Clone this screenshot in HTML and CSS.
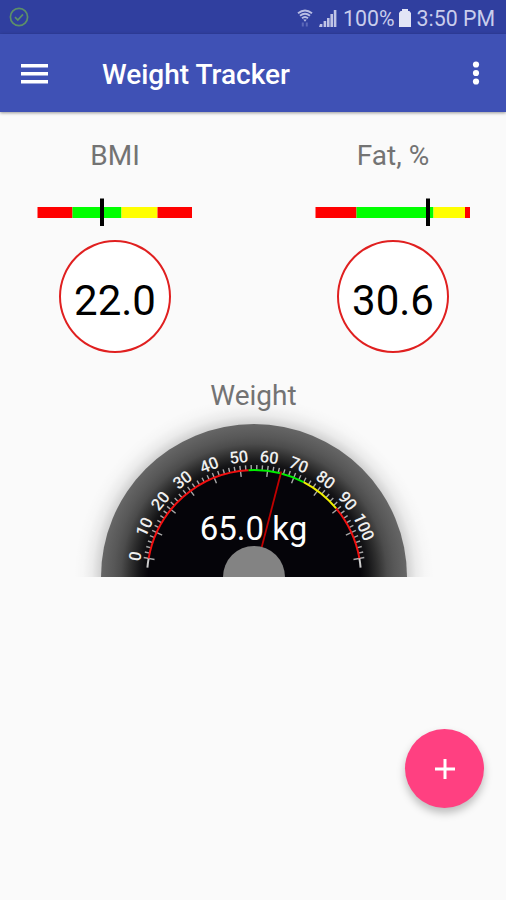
FILE: index.html
```
<!DOCTYPE html>
<html lang="en">
<head>
    <meta charset="UTF-8">
    <meta name="viewport" content="width=device-width, initial-scale=1.0">
    <title>Weight Tracker</title>
    <link rel="stylesheet" href="styles.css">
</head>
<body>

    <div class="status-bar">
        <svg class="check" width="20" height="20" viewBox="0 0 20 20">
            <circle cx="10" cy="10" r="8.6"/>
            <path d="M6 10.2l2.8 2.8 5.2-5.6"/>
        </svg>
        <div class="status-right">
            <svg class="wifi" width="16" height="19" viewBox="0 0 16 19">
                <path d="M1 4.2Q8-1.4 15 4.2M3 6.8Q8 2.6 13 6.8M5 9.3Q8 6.8 11 9.3"/>
                <path class="fill" d="M6.3 10.6h3.4L8 12.8z"/>
                <path class="dim" d="M5.8 13.5v4M9.8 13.5v4"/>
            </svg>
            <svg class="signal" width="18" height="18" viewBox="0 0 18 18">
                <path d="M1 15h2.4v3H0zM4.6 12h2.6v6H4.6zM8 9h2.6v9H8zM11.4 5h2.6v13h-2.6zM14.8 1h2.6v17h-2.6z"/>
            </svg>
            <span class="percent">100%</span>
            <svg class="battery" width="12" height="18" viewBox="0 0 12 18">
                <path d="M3 0h6v2h1.4L12 4v14H0V4l1.6-2H3z"/>
            </svg>
            <span class="time">3:50 PM</span>
        </div>
    </div>

    <header class="toolbar">
        <svg class="menu" width="28" height="20" viewBox="0 0 28 20">
            <path d="M0 0h27v3.6H0zM0 8h27v3.6H0zM0 16h27v3.6H0z"/>
        </svg>
        <h1>Weight Tracker</h1>
        <svg class="more" width="8" height="24" viewBox="0 0 8 24">
            <circle cx="4" cy="3.5" r="3.1"/>
            <circle cx="4" cy="12" r="3.1"/>
            <circle cx="4" cy="20.5" r="3.1"/>
        </svg>
    </header>

    <main>
        <div class="stats">
            <section class="stat">
                <h2>BMI</h2>
                <svg class="range" width="156" height="28" viewBox="0 0 156 28">
                    <rect class="bad" x="0.5" y="9" width="35" height="11"/>
                    <rect class="good" x="35.5" y="9" width="49" height="11"/>
                    <rect class="warn" x="84.5" y="9" width="36" height="11"/>
                    <rect class="bad" x="120.5" y="9" width="34.5" height="11"/>
                    <rect x="63" y="0.5" width="4" height="27.5"/>
                </svg>
                <div class="circle">22.0</div>
            </section>
            <section class="stat">
                <h2>Fat, %</h2>
                <svg class="range" width="156" height="28" viewBox="0 0 156 28">
                    <rect class="bad" x="0.5" y="9" width="41" height="11"/>
                    <rect class="good" x="41.5" y="9" width="77" height="11"/>
                    <rect class="warn" x="118.5" y="9" width="31.5" height="11"/>
                    <rect class="bad" x="150" y="9" width="5" height="11"/>
                    <rect x="111" y="0.5" width="4" height="27.5"/>
                </svg>
                <div class="circle">30.6</div>
            </section>
        </div>

        <section class="weight">
            <h2>Weight</h2>
            <svg class="gauge" width="360" height="176" viewBox="-180 -176 360 176">
                <defs>
                    <radialGradient id="shadow" gradientUnits="userSpaceOnUse" cx="0" cy="0" r="180">
                        <stop offset="0.85" stop-color="#000" stop-opacity="0.16"/>
                        <stop offset="0.9" stop-color="#000" stop-opacity="0.06"/>
                        <stop offset="0.95" stop-color="#000" stop-opacity="0.015"/>
                        <stop offset="1" stop-color="#000" stop-opacity="0"/>
                    </radialGradient>
                    <radialGradient id="face" gradientUnits="userSpaceOnUse" cx="0" cy="0" r="153">
                        <stop offset="0.69" stop-color="#050409"/>
                        <stop offset="0.75" stop-color="#161618"/>
                        <stop offset="0.81" stop-color="#303030"/>
                        <stop offset="0.87" stop-color="#4c4c4c"/>
                        <stop offset="0.92" stop-color="#585858"/>
                        <stop offset="1" stop-color="#666"/>
                    </radialGradient>
                </defs>
                <circle r="180" fill="url(#shadow)"/>
                <circle r="153" fill="url(#face)"/>
                <g id="scale"></g>
                <text class="value" x="-0.5" y="-37">65.0 kg</text>
                <line class="needle" x1="0" y1="0" x2="0" y2="-109" transform="rotate(14.5)"/>
                <circle class="hub" r="31"/>
            </svg>
        </section>
    </main>

    <button class="fab" aria-label="Add">
        <svg width="20" height="20" viewBox="0 0 20 20">
            <path d="M10 0v20M0 10h20"/>
        </svg>
    </button>

    <script>
        var scale = document.getElementById('scale');
        var MAX = 110;
        var RADIUS = 107;

        // 0 and 110 kg sit 80 degrees either side of the top
        function angle(kg) {
            return (kg - MAX / 2) * 160 / MAX;
        }

        function point(deg) {
            var a = deg * Math.PI / 180;
            return (RADIUS * Math.sin(a)).toFixed(2) + ' ' + (-RADIUS * Math.cos(a)).toFixed(2);
        }

        function arc(from, to, name) {
            return '<path class="arc ' + name + '" d="M' + point(from) + 'A' + RADIUS + ' ' + RADIUS + ' 0 0 1 ' + point(to) + '"/>';
        }

        var html = '';
        for (var kg = 0; kg <= MAX; kg += 2) {
            var major = kg % 10 === 0;
            html += '<g transform="rotate(' + angle(kg).toFixed(2) + ')">';
            html += '<line class="tick" y1="-112" y2="' + (major ? -101 : -107) + '"/>';
            if (major && kg < MAX) {
                html += '<text class="mark" y="-115">' + kg + '</text>';
            }
            html += '</g>';
        }
        html += arc(-85, -80, 'edge');
        html += arc(angle(0), angle(53), 'low');
        html += arc(angle(53), angle(74), 'normal');
        html += arc(angle(74), angle(89.5), 'over');
        html += arc(angle(89.5), angle(110), 'low');
        html += arc(80, 85, 'edge');
        scale.innerHTML = html;
    </script>

</body>
</html>
```
FILE: styles.css
```
body {
    margin: 0;
    height: 900px;
    overflow: hidden;
    position: relative;
    font-family: Roboto, sans-serif;
    background-color: #fafafa;
}

svg {
    display: block;
}

h1, h2 {
    margin: 0;
}

.status-bar {
    box-sizing: border-box;
    height: 34px;
    padding: 0 11px 0 9px;
    display: flex;
    align-items: center;
    justify-content: space-between;
    background-color: #303f9f;
    color: #c9cdec;
    font-size: 21.3px;
}

.check {
    fill: none;
    stroke: #5d9068;
    stroke-width: 1.7;
}

.status-right {
    display: flex;
    align-items: center;
    padding-top: 2px;
}

.wifi {
    fill: none;
    stroke: #b9bee4;
    stroke-width: 1.9;
    margin-right: 6px;
}

.wifi .fill {
    fill: #b9bee4;
    stroke: none;
}

.wifi .dim {
    stroke: #5c68b8;
    stroke-width: 2;
}

.signal {
    fill: #c0c4e6;
    margin-right: 6px;
}

.battery {
    fill: #e2e5f6;
    margin: 0 6px 0 4px;
}

.toolbar {
    box-sizing: border-box;
    height: 78px;
    padding: 0 26px 0 21px;
    display: flex;
    align-items: center;
    background-color: #3f51b5;
    box-shadow: 0 1px 3px rgba(0, 0, 0, 0.4);
    fill: #fff;
}

.menu {
    margin-top: 2px;
}

.toolbar h1 {
    flex: 1;
    margin-left: 53px;
    padding-top: 3px;
    color: #fff;
    font-size: 28px;
    font-weight: 500;
}

h2 {
    color: #737373;
    font-size: 28px;
    line-height: 34px;
    font-weight: 400;
    text-align: center;
}

.stats {
    display: flex;
    justify-content: space-between;
    padding: 27px 0 0 1px;
}

.stat {
    width: 228px;
    display: flex;
    flex-direction: column;
    align-items: center;
}

.stat:last-child {
    width: 226px;
}

.range {
    margin: 25px 0 14px;
}

.bad {
    fill: #f00;
}

.good {
    fill: #0f0;
}

.warn {
    fill: #ff0;
}

.circle {
    box-sizing: border-box;
    width: 112px;
    height: 113px;
    border: 2px solid #e02020;
    border-radius: 50%;
    background-color: #fff;
    color: #000;
    font-size: 42px;
    line-height: 118px;
    text-align: center;
}

.weight {
    display: flex;
    flex-direction: column;
    align-items: center;
    padding: 26px 0 0 1px;
}

.gauge {
    margin-top: -12px;
}

.tick {
    stroke: #a8a8a8;
    stroke-width: 1.4;
}

.mark {
    fill: #f0f0f0;
    font-size: 16.5px;
    font-weight: 500;
    text-anchor: middle;
}

.arc {
    fill: none;
    stroke-width: 2;
}

.low {
    stroke: #f01010;
}

.normal {
    stroke: #0e0;
}

.over {
    stroke: #ee0;
}

.edge {
    stroke: #ccc;
}

.value {
    fill: #fff;
    font-size: 33px;
    text-anchor: middle;
}

.needle {
    stroke: #c00000;
    stroke-width: 1.8;
}

.hub {
    fill: #838383;
}

.fab {
    position: absolute;
    right: 22px;
    bottom: 92px;
    width: 79px;
    height: 79px;
    padding: 0;
    display: flex;
    align-items: center;
    justify-content: center;
    border: none;
    border-radius: 50%;
    background-color: #ff4081;
    box-shadow: 0 5px 9px rgba(0, 0, 0, 0.25);
}

.fab path {
    stroke: #fff;
    stroke-width: 3;
}
```
